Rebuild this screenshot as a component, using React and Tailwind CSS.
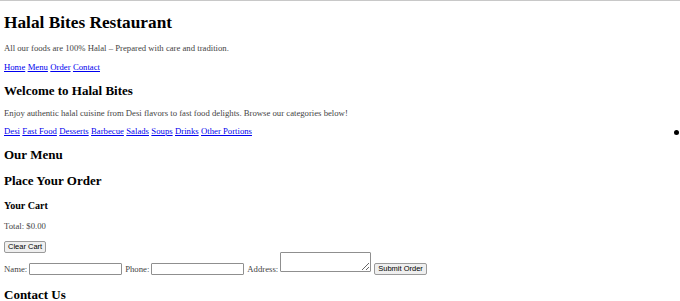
import React from "react";

const serif = { fontFamily: '"Liberation Serif", "Times New Roman", serif' };

const Link = ({ children }) => (
  <a href="#" className="text-[#0000ee] underline">
    {children}
  </a>
);

const Btn = ({ children }) => (
  <button className="h-[12px] px-[3px] bg-[#efefef] border border-[#9a9a9a] rounded-[2px] text-[7.5px] leading-none text-black font-['Liberation_Sans',Arial,sans-serif]">
    {children}
  </button>
);

const Field = () => (
  <input className="w-[93px] h-[12px] border border-[#8f8f8f] rounded-[1px] bg-white" />
);

const App = () => {
  const cats = ["Desi", "Fast Food", "Desserts", "Barbecue", "Salads", "Soups", "Drinks", "Other Portions"];
  return (
    <div className="relative w-full min-h-[301px] bg-white border-t border-[#c8c8c8] overflow-hidden" style={serif}>
      <div className="px-[4px] pt-[11px]">
        <h1 className="text-[17.3px] leading-[21px] font-bold text-black">Halal Bites Restaurant</h1>
        <p className="mt-[10px] text-[8.7px] leading-[10px] text-[#444]">
          All our foods are 100% Halal – Prepared with care and tradition.
        </p>
        <nav className="mt-[9px] text-[8.7px] leading-[10px] flex gap-[2.4px]">
          <Link>Home</Link>
          <Link>Menu</Link>
          <Link>Order</Link>
          <Link>Contact</Link>
        </nav>

        <h2 className="mt-[11px] text-[13px] leading-[16px] font-bold text-black">Welcome to Halal Bites</h2>
        <p className="mt-[9px] text-[8.7px] leading-[10px] text-[#444]">
          Enjoy authentic halal cuisine from Desi flavors to fast food delights. Browse our categories below!
        </p>
        <div className="mt-[8px] text-[8.7px] leading-[10px] flex gap-[2.4px]">
          {cats.map((c) => (
            <Link key={c}>{c}</Link>
          ))}
        </div>

        <h2 className="mt-[11px] text-[13px] leading-[16px] font-bold text-black">Our Menu</h2>
        <h2 className="mt-[10px] text-[13px] leading-[16px] font-bold text-black">Place Your Order</h2>
        <h3 className="mt-[11px] text-[10.1px] leading-[12px] font-bold text-black">Your Cart</h3>
        <p className="mt-[9px] text-[8.7px] leading-[10px] text-[#444]">Total: $0.00</p>
        <div className="mt-[10px] h-[12px] flex">
          <Btn>Clear Cart</Btn>
        </div>
        <form className="mt-[-1px] flex items-end gap-[3px] text-[8.7px] leading-[10px] text-[#444]">
          <label className="flex items-end gap-[2px]">
            <span className="pb-[1px]">Name:</span>
            <Field />
          </label>
          <label className="flex items-end gap-[2px]">
            <span className="pb-[1px]">Phone:</span>
            <Field />
          </label>
          <label className="flex items-end gap-[2px]">
            <span className="pb-[1px]">Address:</span>
            <textarea className="w-[91px] h-[20px] mb-[3px] border border-[#8f8f8f] rounded-[1px] bg-white resize-y" />
          </label>
          <Btn>Submit Order</Btn>
        </form>
        <h2 className="mt-[12px] text-[13px] leading-[16px] font-bold text-black">Contact Us</h2>
      </div>
      <span className="absolute right-[1px] top-[129px] w-[5px] h-[5px] rounded-full bg-black" />
    </div>
  );
};

export default App;
